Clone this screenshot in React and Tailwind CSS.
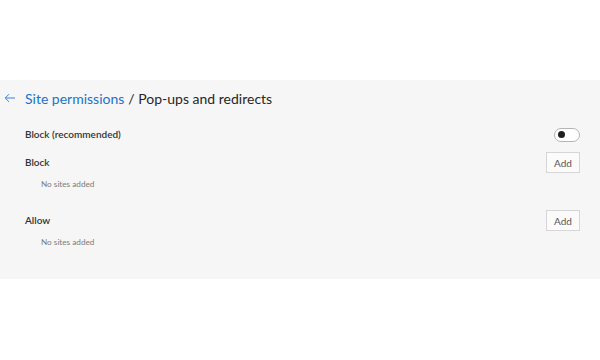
const AddButton = () => (
  <button className="h-[21px] w-[34px] border border-[#d6d6d6] bg-[#fbfbfb] text-[10px] text-[#555] leading-none">
    Add
  </button>
)

const NoSites = () => (
  <div className="h-[22px] flex items-center pl-[41px] text-[8.2px] text-[#7a7a7a]">No sites added</div>
)

export default function App() {
  return (
    <div className="w-[600px] h-[360px] bg-white pt-[80px]" style={{ fontFamily: 'Lato, "Open Sans", sans-serif' }}>
      <div className="bg-[#f6f6f6] h-[199px] pr-[20px]">
        <div className="h-[37px] flex items-center">
          <svg width="12" height="10" viewBox="0 0 12 10" className="ml-[4px] mr-[9px] -mt-[2px]" fill="none" stroke="#3b82d6" strokeWidth="1">
            <path d="M11 5H1.5M5 1.2L1.2 5L5 8.8" />
          </svg>
          <span className="text-[14px] text-[#1a73c8]">Site permissions</span>
          <span className="text-[14px] text-[#262626] ml-[4px]">/ Pop-ups and redirects</span>
        </div>
        <div className="h-[35px] flex items-center justify-between pl-[25px]">
          <span className="text-[10px] font-semibold text-[#333]">Block (recommended)</span>
          <div className="w-[26px] h-[14px] rounded-full border border-[#b5b5b5] bg-white flex items-center pl-[3px]">
            <div className="w-[7px] h-[7px] rounded-full bg-[#1f1f1f]" />
          </div>
        </div>
        <div className="h-[21px] flex items-center justify-between pl-[25px]">
          <span className="text-[10px] font-semibold text-[#333]">Block</span>
          <AddButton />
        </div>
        <NoSites />
        <div className="h-[21px] mt-[15px] flex items-center justify-between pl-[25px]">
          <span className="text-[10px] font-semibold text-[#333]">Allow</span>
          <AddButton />
        </div>
        <NoSites />
      </div>
    </div>
  )
}
